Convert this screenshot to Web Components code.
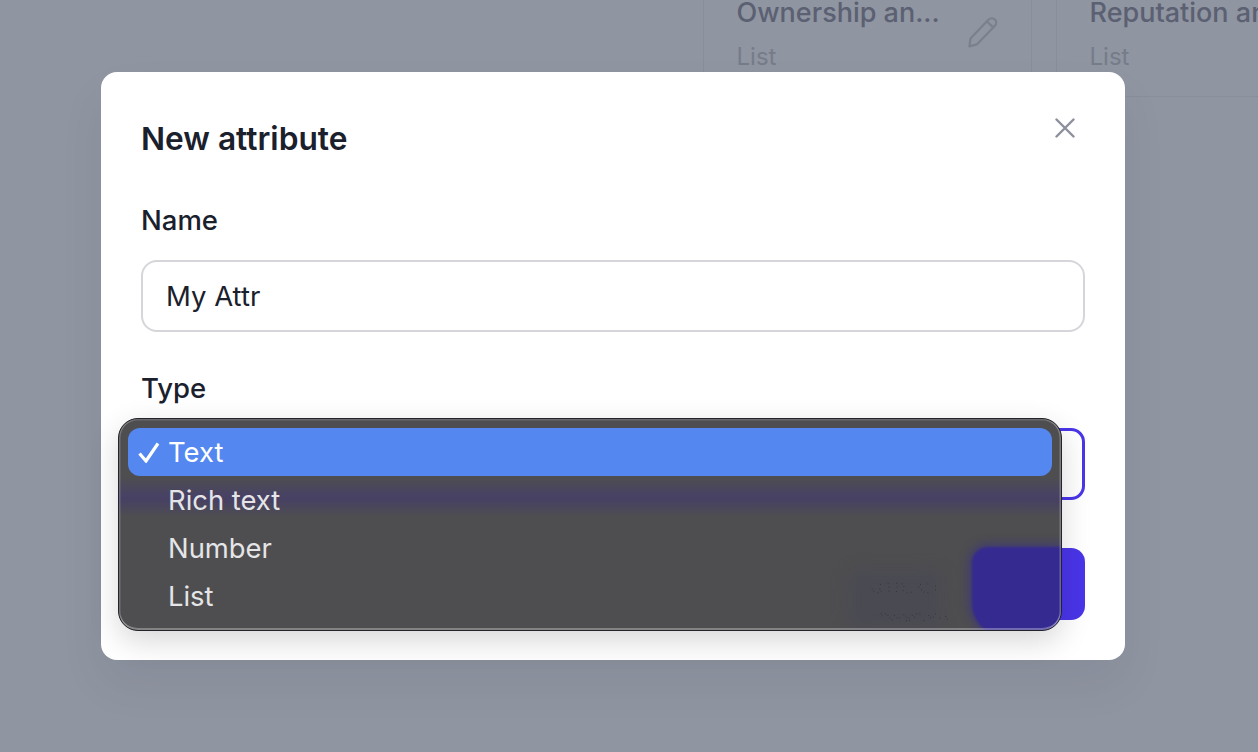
<!DOCTYPE html>
<html lang="en">
<head>
<meta charset="utf-8">
<title>New attribute</title>
<style>
    html, body { margin: 0; padding: 0; height: 100%; overflow: hidden; }
    body { background: #8f95a1; font-family: Inter, "Liberation Sans", sans-serif; }
</style>
</head>
<body>
<attribute-page>
    <attribute-card slot="cards" label="Ownership an..." type="List" editable></attribute-card>
    <attribute-card slot="cards" label="Reputation and more" type="List"></attribute-card>
    <attribute-modal slot="modal" heading="New attribute">
        <form-field label="Name"><text-box value="My Attr"></text-box></form-field>
        <form-field label="Type">
            <select-box></select-box>
            <select-menu slot="over">
                <menu-option selected>Text</menu-option>
                <menu-option>Rich text</menu-option>
                <menu-option>Number</menu-option>
                <menu-option>List</menu-option>
            </select-menu>
        </form-field>
        <primary-button slot="footer"></primary-button>
    </attribute-modal>
</attribute-page>
<script>
class AttributePage extends HTMLElement {
    constructor() {
        super()
        this.attachShadow({ mode: 'open' })
        this.shadowRoot.innerHTML = `
            <style>
                :host { display: block; position: relative; width: 1258px; height: 752px; overflow: hidden; background: #8f95a1; }
                .cards {
                    display: flex;
                    gap: 24.5px;
                    height: 97px;
                    box-sizing: border-box;
                    margin-left: 703px;
                    border-bottom: 1px solid #888e9a;
                    overflow: hidden;
                }
                .overlay { position: absolute; inset: 0; padding: 72px 0 0 101px; }
            </style>
            <div class="cards"><slot name="cards"></slot></div>
            <div class="overlay"><slot name="modal"></slot></div>
        `
    }
}

class AttributeCard extends HTMLElement {
    constructor() {
        super()
        this.attachShadow({ mode: 'open' })
    }
    connectedCallback() {
        const pencil = this.hasAttribute('editable') ? `
            <svg class="pencil" width="32" height="32" viewBox="0 0 32 32" fill="none" stroke="#7b808d" stroke-width="2.2" stroke-linejoin="round" stroke-linecap="round">
                <path d="M3.5 22.5 21.6 3.6a4.4 4.4 0 0 1 6.3 0 4.4 4.4 0 0 1 0 6.2L9.8 28.4 2.4 30.4Z"/>
                <path d="M20 5.5 26.4 11.6"/>
            </svg>` : ''
        this.shadowRoot.innerHTML = `
            <style>
                :host {
                    display: block;
                    position: relative;
                    flex: none;
                    width: 328.5px;
                    height: 96px;
                    box-sizing: border-box;
                    padding: 0 32.5px;
                    border: solid #888e9a;
                    border-width: 0 1px;
                    white-space: nowrap;
                }
                .label { font-size: 27px; line-height: 36px; margin-top: -5px; color: #5b6072; font-weight: 500; }
                .type { font-size: 24px; line-height: 32px; margin-top: 10px; color: #777c8a; }
                .pencil { position: absolute; left: 263px; top: 16px; }
            </style>
            <div class="label">${this.getAttribute('label')}</div>
            <div class="type">${this.getAttribute('type')}</div>
            ${pencil}
        `
    }
}

class AttributeModal extends HTMLElement {
    constructor() {
        super()
        this.attachShadow({ mode: 'open' })
    }
    connectedCallback() {
        this.shadowRoot.innerHTML = `
            <style>
                :host {
                    display: block;
                    width: 1024px;
                    height: 588px;
                    box-sizing: border-box;
                    padding: 47px 40px 40px 40px;
                    background: #fff;
                    border-radius: 16px;
                    box-shadow: 0 24px 48px rgba(17, 24, 39, 0.06);
                    color: #1a202c;
                }
                header { display: flex; justify-content: space-between; align-items: flex-start; height: 40px; }
                h2 { margin: 0; font-size: 31.7px; line-height: 40px; font-weight: 600; }
                svg { margin: -1px 10px 0 0; display: block; }
                .fields { display: flex; flex-direction: column; gap: 40px; margin-top: 45px; }
                footer { display: flex; justify-content: flex-end; margin-top: 48px; }
            </style>
            <header>
                <h2>${this.getAttribute('heading')}</h2>
                <svg width="20" height="20" viewBox="0 0 20 20" fill="none" stroke="#8b909c" stroke-width="2.4" stroke-linecap="round">
                    <path d="M1.5 1.5 18.5 18.5M18.5 1.5 1.5 18.5"/>
                </svg>
            </header>
            <div class="fields"><slot></slot></div>
            <footer><slot name="footer"></slot></footer>
        `
    }
}

class FormField extends HTMLElement {
    constructor() {
        super()
        this.attachShadow({ mode: 'open' })
    }
    connectedCallback() {
        this.shadowRoot.innerHTML = `
            <style>
                :host { display: block; position: relative; }
                label { display: block; font-size: 27.5px; line-height: 32px; font-weight: 500; margin-bottom: 24px; }
            </style>
            <label>${this.getAttribute('label')}</label>
            <slot></slot>
            <slot name="over"></slot>
        `
    }
}

class TextBox extends HTMLElement {
    constructor() {
        super()
        this.attachShadow({ mode: 'open' })
    }
    connectedCallback() {
        this.shadowRoot.innerHTML = `
            <style>
                :host {
                    display: flex;
                    align-items: center;
                    height: 72px;
                    box-sizing: border-box;
                    padding: 0 23px;
                    border: 2px solid #d5d6da;
                    border-radius: 16px;
                    font-size: 27.5px;
                }
            </style>
            ${this.getAttribute('value')}
        `
    }
}

class SelectBox extends HTMLElement {
    constructor() {
        super()
        this.attachShadow({ mode: 'open' })
        this.shadowRoot.innerHTML = `
            <style>
                :host { display: block; height: 72px; box-sizing: border-box; border: 3px solid #4a35e8; border-radius: 14px; }
            </style>
        `
    }
}

const SPECKS = [
    [95,85],[100,92],[112,97],[118,85],[120,72],[122,92],[143,68],[145,80],[146,92],[168,68],[170,80],[168,93],
    [185,70],[190,78],[188,90],[200,97],[212,95],[240,72],[235,80],[243,88],[250,95],[262,97],[262,70],[285,76],[285,88],
    [122,160],[135,160],[125,166],[142,165],[148,172],[155,178],[170,172],[178,172],[162,165],[190,163],[197,170],[205,172],
    [198,180],[207,180],[215,165],[222,170],[228,160],[238,160],[250,180],[265,165],[270,172],[278,170],[285,160],[298,172],[316,168],[320,175]
]

class SelectMenu extends HTMLElement {
    constructor() {
        super()
        this.attachShadow({ mode: 'open' })
        const specks = SPECKS.map(([x, y]) => `<rect x="${x}" y="${y}" width="3" height="3"/>`).join('')
        this.shadowRoot.innerHTML = `
            <style>
                :host {
                    display: block;
                    position: absolute;
                    left: -23px;
                    top: 46px;
                    width: 944px;
                    height: 212.5px;
                    box-sizing: border-box;
                    padding: 9px;
                    background: #4e4e50;
                    border-radius: 20px;
                    border: 1px solid #22232b;
                    box-shadow: 0 10px 30px rgba(0, 0, 0, 0.16);
                    overflow: hidden;
                }
                .band {
                    position: absolute;
                    left: 0; right: 0; top: 58px; height: 40px;
                    background: linear-gradient(#4e4e50 0, #484264 45%, #474064 55%, #4e4e50 100%);
                }
                .blob {
                    position: absolute;
                    left: 853px; top: 128px;
                    width: 100px; height: 90px;
                    background: #352a90;
                    border-radius: 16px 12px 0 34px;
                    box-shadow: 0 0 10px 3px rgba(53, 42, 144, 0.55);
                    filter: blur(1px);
                }
                .smudge {
                    position: absolute;
                    left: 728px; top: 150px;
                    width: 96px; height: 60px;
                    background: #4a4a53;
                    border-radius: 14px;
                    filter: blur(7px);
                }
                .specks { position: absolute; left: 721px; top: 141px; }
                .rim {
                    position: absolute;
                    inset: 0;
                    border-radius: 19px;
                    box-shadow: inset 0 1.5px rgba(255, 255, 255, 0.16), inset 1.5px 0 rgba(255, 255, 255, 0.2), inset -1.5px 0 rgba(255, 255, 255, 0.26), inset 0 -2px rgba(255, 255, 255, 0.3);
                }
                .list { position: relative; }
            </style>
            <div class="band"></div>
            <div class="smudge"></div>
            <svg class="specks" width="130" height="70" viewBox="0 0 390 210" fill="#37373b">${specks}</svg>
            <div class="blob"></div>
            <div class="list"><slot></slot></div>
            <div class="rim"></div>
        `
    }
}

class MenuOption extends HTMLElement {
    constructor() {
        super()
        this.attachShadow({ mode: 'open' })
        this.shadowRoot.innerHTML = `
            <style>
                :host {
                    display: flex;
                    align-items: center;
                    height: 48px;
                    padding-left: 40px;
                    position: relative;
                    font-size: 27.4px;
                    color: #e5e5e8;
                    border-radius: 12px;
                }
                :host([selected]) { background: #5488f0; color: #fff; }
                svg { position: absolute; left: 10px; top: 14px; display: none; }
                :host([selected]) svg { display: block; }
            </style>
            <svg width="22" height="21" viewBox="0 0 22 21" fill="none" stroke="#fff" stroke-width="3.2">
                <path d="M1.5 11.5 8 19 20 1.5"/>
            </svg>
            <slot></slot>
        `
    }
}

class PrimaryButton extends HTMLElement {
    constructor() {
        super()
        this.attachShadow({ mode: 'open' })
        this.shadowRoot.innerHTML = `
            <style>
                :host { display: block; width: 115px; height: 72px; background: #4a35e8; border-radius: 14px; }
            </style>
        `
    }
}

customElements.define('attribute-page', AttributePage)
customElements.define('attribute-card', AttributeCard)
customElements.define('attribute-modal', AttributeModal)
customElements.define('form-field', FormField)
customElements.define('text-box', TextBox)
customElements.define('select-box', SelectBox)
customElements.define('select-menu', SelectMenu)
customElements.define('menu-option', MenuOption)
customElements.define('primary-button', PrimaryButton)
</script>
</body>
</html>
